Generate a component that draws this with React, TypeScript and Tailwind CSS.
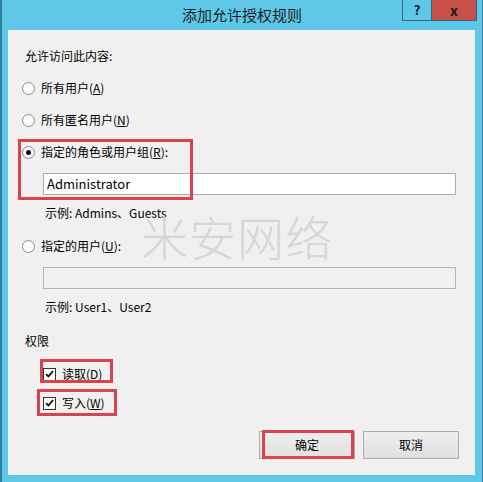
import type { ReactNode } from 'react'

const font = { fontFamily: '"Noto Sans CJK SC", "Noto Sans", sans-serif' }

function Radio({ checked, children }: { checked?: boolean; children: ReactNode }) {
  return (
    <div className="flex h-[16px] items-center">
      <span className="flex h-[13px] w-[13px] items-center justify-center rounded-full border border-[#8c8c8c] bg-[#fbfbfb]">
        {checked && <span className="h-[5px] w-[5px] rounded-full bg-[#111]" />}
      </span>
      <span className="ml-[6px]">{children}</span>
    </div>
  )
}

function Check({ children }: { children: ReactNode }) {
  return (
    <div className="flex h-[16px] items-center">
      <span className="flex h-[13px] w-[13px] items-center justify-center border border-[#333] bg-white">
        <svg width="9" height="8" viewBox="0 0 9 8">
          <path d="M1 4.2 L3.4 6.5 L8 1.2" fill="none" stroke="#111" strokeWidth="1.8" />
        </svg>
      </span>
      <span className="ml-[6px]">{children}</span>
    </div>
  )
}

function Button({ children }: { children: ReactNode }) {
  return (
    <button className="flex h-[28px] w-[96px] items-center justify-center border border-[#acacac] bg-gradient-to-b from-[#efefef] to-[#e0e0e0] text-[12px] text-black">
      {children}
    </button>
  )
}

export default function App() {
  return (
    <div
      style={font}
      className="flex h-[482px] w-[483px] flex-col border-l-2 border-r border-[#2f7f9f] bg-[#5fc7e7] text-[12px] leading-[16px] text-black"
    >
      {/* title bar */}
      <div className="relative flex h-[30px] shrink-0 items-center justify-center">
        <span className="text-[15px] text-[#1e1e1e]">添加允许授权规则</span>
        <div className="absolute right-[5px] top-0 flex">
          <span className="flex h-[21px] w-[29px] items-center justify-center border border-r-0 border-t-0 border-[#2c6a84] bg-[#5fc7e7] text-[13px] font-bold text-[#0f1f3a]">
            ?
          </span>
          <span className="flex h-[21px] w-[46px] items-center justify-center border border-t-0 border-[#2c6a84] bg-[#c75149] text-[14px] font-bold text-[#1a1a1a]">
            x
          </span>
        </div>
      </div>

      {/* client area */}
      <div className="relative ml-[6px] mr-[7px] flex h-[445px] flex-col bg-[#f0f0f0]">
        <div className="ml-[17px] mt-[18px] h-[16px]">允许访问此内容:</div>

        <div className="ml-[14px] mt-[16px]">
          <Radio>
            所有用户(<u>A</u>)
          </Radio>
        </div>
        <div className="ml-[14px] mt-[16px]">
          <Radio>
            所有匿名用户(<u>N</u>)
          </Radio>
        </div>
        <div className="ml-[14px] mt-[16px]">
          <Radio checked>
            指定的角色或用户组(<u>R</u>):
          </Radio>
        </div>

        <div className="ml-[35px] mt-[13px] flex h-[22px] w-[413px] items-center border border-[#ababab] bg-white pl-[3px] text-[13px]">
          Administrator
        </div>
        <div className="ml-[37px] mt-[10px] h-[16px]">示例: Admins、Guests</div>

        <div className="ml-[14px] mt-[17px]">
          <Radio>
            指定的用户(<u>U</u>):
          </Radio>
        </div>
        <div className="ml-[35px] mt-[13px] h-[22px] w-[413px] border border-[#b5b5b5] bg-[#f0f0f0]" />
        <div className="ml-[37px] mt-[10px] h-[16px]">示例: User1、User2</div>

        <div className="ml-[17px] mt-[18px] h-[16px]">权限</div>

        <div className="ml-[35px] mt-[17px]">
          <Check>
            读取(<u>D</u>)
          </Check>
        </div>
        <div className="ml-[35px] mt-[13px]">
          <Check>
            写入(<u>W</u>)
          </Check>
        </div>

        <div className="mr-[16px] mt-[20px] flex justify-end gap-[8px]">
          <Button>确定</Button>
          <Button>取消</Button>
        </div>

        {/* watermark */}
        <div className="pointer-events-none absolute left-[133px] top-[178px] text-[47px] font-light leading-[56px] tracking-[1px] text-[#d6d6d6]">
          米安网络
        </div>

        {/* red annotation boxes */}
        <div className="absolute left-[10px] top-[109px] h-[61px] w-[175px] border-[3px] border-[#d8434d]" />
        <div className="absolute left-[32px] top-[329px] h-[24px] w-[73px] border-[3px] border-[#d8434d]" />
        <div className="absolute left-[29px] top-[359px] h-[27px] w-[80px] border-[3px] border-[#d8434d]" />
        <div className="absolute left-[254px] top-[400px] h-[29px] w-[92px] border-[3px] border-[#d8434d]" />
      </div>
    </div>
  )
}
